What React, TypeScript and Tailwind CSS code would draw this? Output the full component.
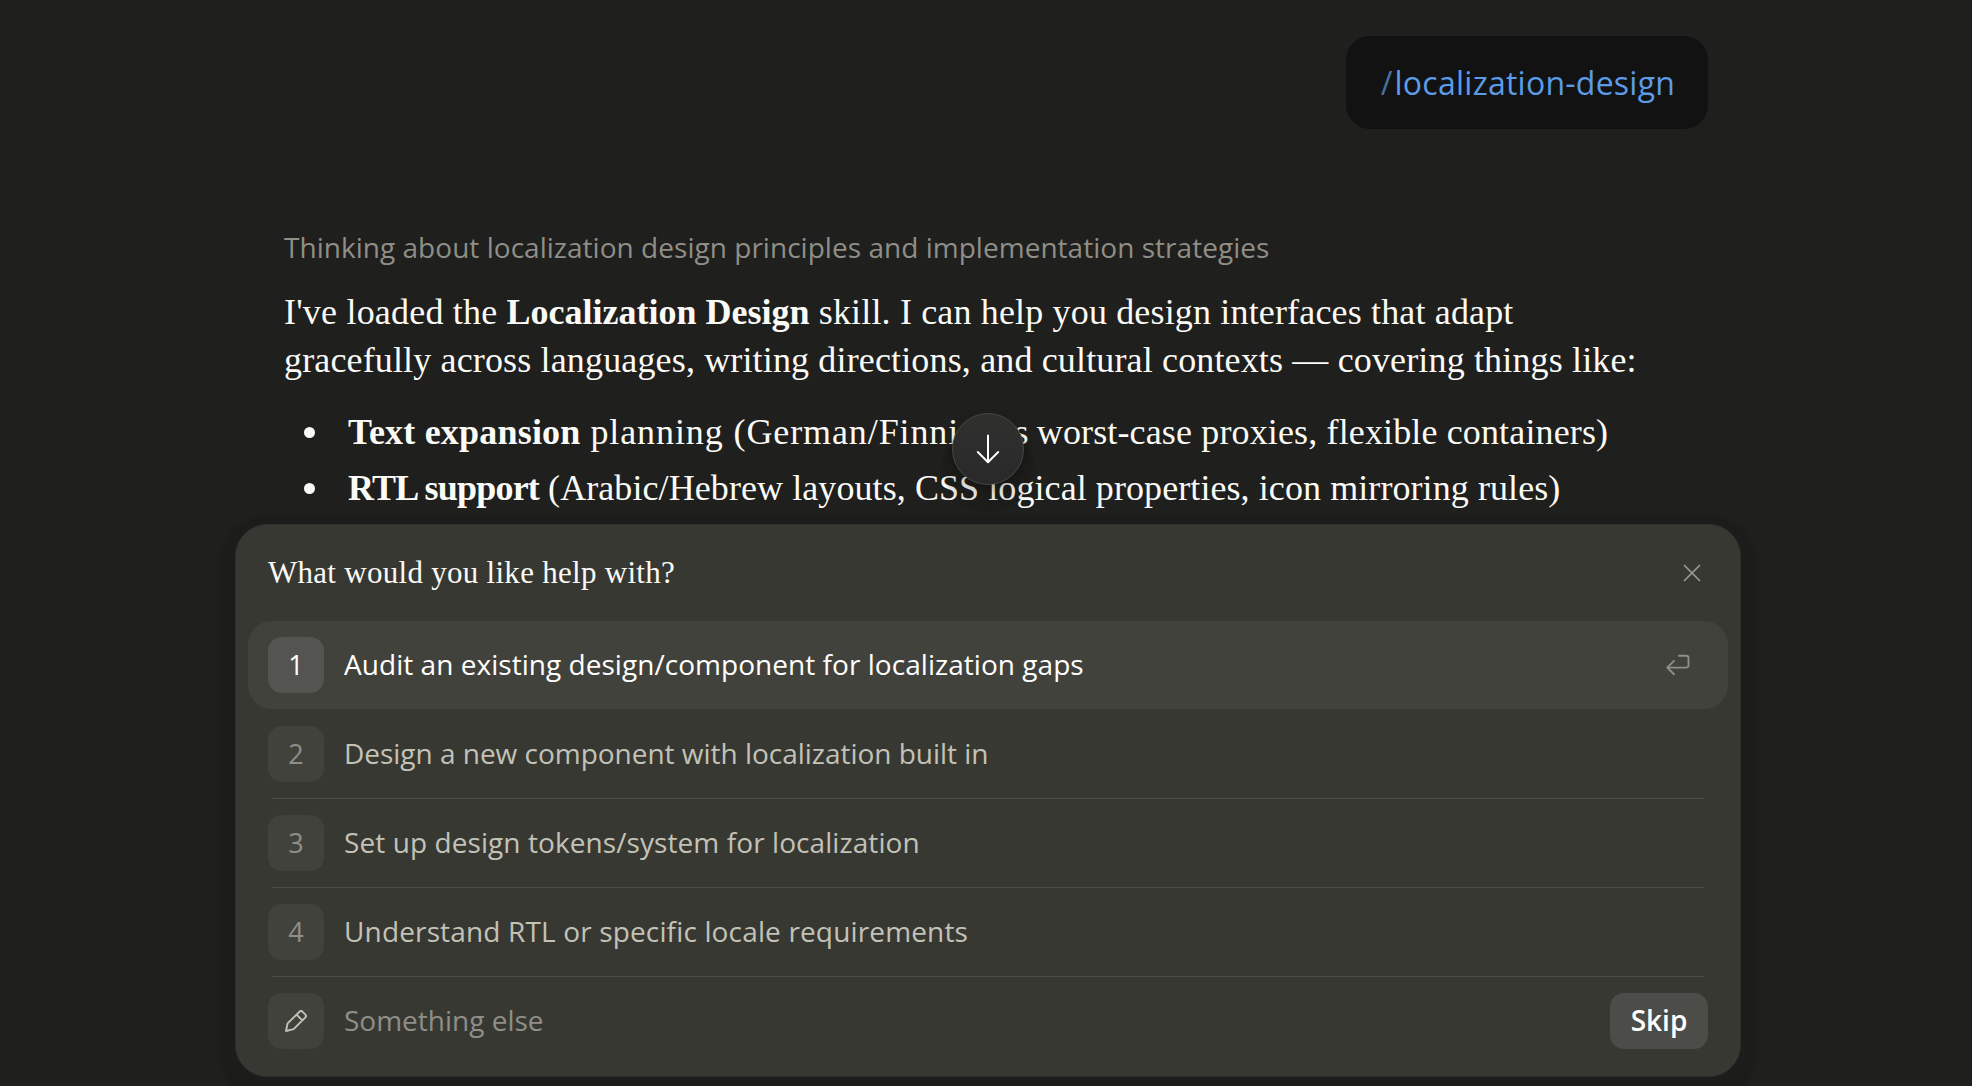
import { useState } from 'react';

interface Option {
  id: number;
  label: string;
  tracking: string;
}

const options: Option[] = [
  { id: 1, label: 'Audit an existing design/component for localization gaps', tracking: 'tracking-[0.04px]' },
  { id: 2, label: 'Design a new component with localization built in', tracking: 'tracking-[-0.02px]' },
  { id: 3, label: 'Set up design tokens/system for localization', tracking: 'tracking-[0.08px]' },
  { id: 4, label: 'Understand RTL or specific locale requirements', tracking: 'tracking-[0.15px]' },
];

const ArrowDownIcon = () => (
  <svg width="24" height="30" viewBox="0 0 24 30" fill="none" stroke="currentColor" strokeWidth="2" strokeLinecap="round" strokeLinejoin="round">
    <path d="M12 1.5V28M1.8 18 12 28.2 22.2 18" />
  </svg>
);

const CloseIcon = () => (
  <svg width="18" height="18" viewBox="0 0 18 18" fill="none" stroke="currentColor" strokeWidth="1.7" strokeLinecap="round">
    <path d="M1.5 1.5l15 15M16.5 1.5l-15 15" />
  </svg>
);

const ReturnIcon = () => (
  <svg width="24" height="22" viewBox="0 0 24 22" fill="none" stroke="currentColor" strokeWidth="1.9" strokeLinecap="round" strokeLinejoin="round">
    <path d="M13 1.7h7.2a2.3 2.3 0 0 1 2.3 2.3v7.3a2.3 2.3 0 0 1-2.3 2.3H1.2M8 6.9 1.2 13.6 8 20.3" />
  </svg>
);

const PencilIcon = () => (
  <svg width="22" height="22" viewBox="0 0 22 22" fill="none" stroke="currentColor" strokeWidth="1.9" strokeLinejoin="round">
    <path d="M14.6 1.6a2 2 0 0 1 2.8 0l3 3a2 2 0 0 1 0 2.8L8.6 19.2 1 21l1.6-7.6zM11.6 4.7l5.7 5.7" />
  </svg>
);

const Conversation = () => (
  <div className="ml-[284px] flex h-[524px] w-[1424px] shrink-0 flex-col pt-9">
    <div className="ml-auto flex h-[93px] w-[362px] items-center justify-center rounded-3xl bg-[#121212] pl-[2px] text-[32px] text-[#5b9be8]">
      <span className="mr-[2px] text-[#46719f]">/</span>
      <span className="tracking-[0.25px]">localization-design</span>
    </div>

    <p className="mt-[94px] h-12 text-[28px] leading-[48px] tracking-[0.03px] text-[#8f8e87]">
      Thinking about localization design principles and implementation strategies
    </p>

    <div className="mt-[17px] font-['Liberation_Serif',serif] text-4xl leading-[48px] whitespace-nowrap text-[#fafaf7]">
      <p>
        <span className="tracking-[0.2px]">I've loaded the </span>
        <strong>Localization Design</strong>
        <span className="tracking-[0.16px]"> skill. I can help you design interfaces that adapt</span>
        <br />
        <span className="tracking-[0.15px]">
          gracefully across languages, writing directions, and cultural contexts — covering things like:
        </span>
      </p>
      <ul className="mt-6 flex flex-col gap-2">
        <li className="flex items-center">
          <i className="mr-[33px] ml-5 size-[11px] rounded-full bg-[#fafaf7]" />
          <span>
            <strong className="tracking-[0.2px]">Text expansion</strong>
            <span className="tracking-[0.9px]"> planning (German/Finni</span>
            <span className="tracking-[-0.4px]">sh as </span>
            <span className="tracking-[0.14px]">worst-case proxies, flexible containers)</span>
          </span>
        </li>
        <li className="flex items-center">
          <i className="mr-[33px] ml-5 size-[11px] rounded-full bg-[#fafaf7]" />
          <span>
            <strong className="tracking-[-0.8px]">RTL support</strong>
            <span className="tracking-[0.08px]"> (Arabic/Hebrew layouts, CSS logical properties, icon mirroring rules)</span>
          </span>
        </li>
      </ul>
    </div>
  </div>
);

export default function App() {
  const [selected, setSelected] = useState(1);

  return (
    <div className="relative flex h-[1086px] w-[1972px] flex-col overflow-hidden bg-[#1f1f1d] font-['Open_Sans',sans-serif]">
      <Conversation />

      {/* Scroll to bottom */}
      <button className="absolute top-[413px] left-[952px] flex size-[72px] items-center justify-center rounded-full border border-[#454542] bg-linear-to-b from-[#30302f] to-[#292929] text-white shadow-[0_18px_2px_9px_rgba(0,0,0,0.09),0_4px_10px_rgba(0,0,0,0.25)]">
        <ArrowDownIcon />
      </button>

      {/* Question panel */}
      <section className="relative ml-[235px] flex h-[553px] w-[1506px] shrink-0 flex-col rounded-[32px] border border-[#2f2f2c] bg-[#383833] px-3 shadow-[0_8px_3px_15px_#1c1c1b]">
        <header className="flex h-24 items-center justify-between pr-[27px] pl-5">
          <h2 className="font-['Liberation_Serif',serif] text-[31px] tracking-[0.28px] text-[#fafaf7]">What would you like help with?</h2>
          <button className="text-[#9a9992]">
            <CloseIcon />
          </button>
        </header>

        {options.map((option) => {
          const active = option.id === selected;
          return (
            <div key={option.id}>
              {option.id > 2 && <hr className="mx-6 border-[#4c4c47]" />}
              <button
                onClick={() => setSelected(option.id)}
                className={`flex h-[88px] w-full items-center rounded-3xl pr-[38px] pl-5 ${
                  active ? 'bg-[#42423d] text-white' : 'text-[#c3c2b7]'
                } ${option.id === 1 ? 'mb-px' : ''}`}
              >
                <span
                  className={`flex size-14 items-center justify-center rounded-[14px] text-[27px] ${
                    active ? 'bg-[#545451]' : 'bg-[#42423d] text-[#8f8e87]'
                  }`}
                >
                  {option.id}
                </span>
                <span className={`ml-5 flex-1 pb-[2px] text-left text-[28px] ${option.tracking}`}>{option.label}</span>
                {active && (
                  <span className="text-[#8f8e87]">
                    <ReturnIcon />
                  </span>
                )}
              </button>
            </div>
          );
        })}

        <hr className="mx-6 border-[#4c4c47]" />
        <div className="flex h-[88px] items-center px-5">
          <span className="flex size-14 items-center justify-center rounded-[14px] bg-[#42423d] text-[#c3c2b7]">
            <PencilIcon />
          </span>
          <span className="ml-5 flex-1 pb-[2px] text-[28px] text-[#8f8e87]">Something else</span>
          <button className="h-14 w-[98px] rounded-[14px] bg-[#4c4c48] pb-[2px] text-[28px] font-semibold text-white">Skip</button>
        </div>
      </section>
    </div>
  );
}
